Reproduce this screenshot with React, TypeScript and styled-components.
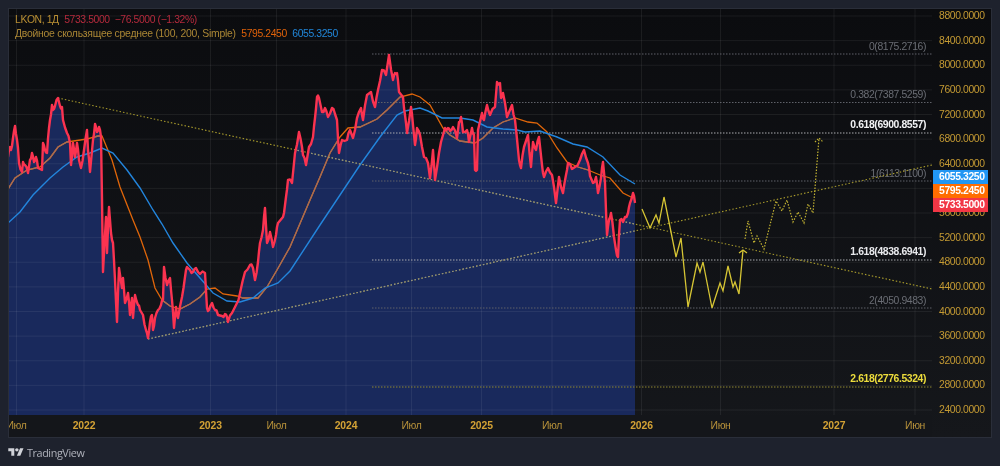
import React from "react";
import styled, { createGlobalStyle } from "styled-components";

type Pt = [number, number];

const GlobalStyle = createGlobalStyle`
  html, body { margin: 0; padding: 0; background: #1e222d; }
`;

const FONT = `"Liberation Sans", Arial, sans-serif`;
const GOLD = "#c49a33";

const Page = styled.div`
  width: 1000px;
  height: 466px;
  box-sizing: border-box;
  padding: 8px 8px 0;
  background: #1e222d;
  font-family: ${FONT};
  overflow: hidden;
  filter: blur(0.3px);
`;

const Chart = styled.div`
  box-sizing: border-box;
  width: 984px;
  height: 430px;
  border: 1px solid #2a2e39;
  display: grid;
  grid-template-columns: 923px 59px;
  grid-template-rows: 406px 22px;
  background: linear-gradient(180deg, #0b0c0f 0%, #15171b 100%);
`;

const Plot = styled.div`
  position: relative;
  overflow: hidden;
  svg { display: block; }
`;

const Legend = styled.div`
  position: absolute;
  left: 6px;
  top: 5px;
  display: flex;
  flex-direction: column;
  gap: 2px;
  line-height: 12px;
`;

const LegendRow = styled.div`
  display: flex;
  gap: 5.5px;
  white-space: pre;
`;

const LegendText = styled.span<{ $color: string; $wide?: boolean }>`
  color: ${(p) => p.$color};
  font-size: 10.4px;
  letter-spacing: ${(p) => (p.$wide ? "-0.25px" : "-0.4px")};
`;

const PriceAxis = styled.div`
  grid-column: 2;
  grid-row: 1 / 3;
  position: relative;
  box-sizing: border-box;
  padding: 1px 0 21px 7px;
  display: flex;
  flex-direction: column;
  justify-content: space-between;
`;

const PriceLabel = styled.div`
  color: ${GOLD};
  font-size: 10.4px;
  letter-spacing: -0.4px;
  line-height: 12px;
`;

const TagStack = styled.div`
  position: absolute;
  left: 1px;
  top: 161px;
  width: 55px;
  display: flex;
  flex-direction: column;
`;

const PriceTag = styled.div<{ $bg: string }>`
  height: 14px;
  box-sizing: border-box;
  padding-left: 6px;
  background: ${(p) => p.$bg};
  color: #fff;
  font-size: 10.4px;
  font-weight: 700;
  letter-spacing: -0.4px;
  line-height: 14px;
`;

const TimeAxis = styled.div`
  position: relative;
  overflow: hidden;
  background: #14161a;
`;

const TimeTick = styled.span.attrs<{ $x: number }>((p) => ({ style: { left: `${p.$x}px` } }))<{ $x: number; $year?: boolean }>`
  position: absolute;
  top: 5px;
  transform: translateX(-50%);
  color: ${(p) => (p.$year ? "#d3a235" : "#b8923a")};
  font-size: 10.4px;
  font-weight: ${(p) => (p.$year ? 700 : 400)};
  letter-spacing: ${(p) => (p.$year ? "-0.1px" : "-0.4px")};
  line-height: 12px;
`;

const Footer = styled.div`
  height: 28px;
  display: flex;
  align-items: center;
  gap: 3px;
`;

const Brand = styled.span`
  color: #aeb1ba;
  font-family: "Open Sans", ${FONT};
  font-size: 10.8px;
  letter-spacing: -0.4px;
`;

const FibLabel = styled.text<{ $tone: string; $bold?: boolean }>`
  fill: ${(p) => p.$tone};
  font-family: ${FONT};
  font-size: 10.4px;
  letter-spacing: -0.4px;
  font-weight: ${(p) => (p.$bold ? 700 : 400)};
`;

const PRICES = [8800, 8400, 8000, 7600, 7200, 6800, 6400, 6000, 5600, 5200, 4800, 4400, 4000, 3600, 3200, 2800, 2400];
const priceY = (p: number) => 16 + ((8800 - p) / 400) * 24.625;

const TICKS: { x: number; label: string; year?: boolean }[] = [
  { x: 16.5, label: "Июл" },
  { x: 84, label: "2022", year: true },
  { x: 210.5, label: "2023", year: true },
  { x: 276.5, label: "Июл" },
  { x: 346, label: "2024", year: true },
  { x: 411.5, label: "Июл" },
  { x: 481.5, label: "2025", year: true },
  { x: 552, label: "Июл" },
  { x: 641.5, label: "2026", year: true },
  { x: 720.5, label: "Июн" },
  { x: 834, label: "2027", year: true },
  { x: 915, label: "Июн" },
];

const FIBS: { y: number; ly: number; label: string; line: string; tone: string; bold?: boolean }[] = [
  { y: 54, ly: 49.5, label: "0(8175.2716)", line: "#5f6168", tone: "#6a6d74" },
  { y: 102.5, ly: 98, label: "0.382(7387.5259)", line: "#5f6168", tone: "#6a6d74" },
  { y: 133, ly: 128, label: "0.618(6900.8557)", line: "#a9aaae", tone: "#f2f3f5", bold: true },
  { y: 181, ly: 176.5, label: "1(6113.1100)", line: "#5f6168", tone: "#6a6d74" },
  { y: 260, ly: 255, label: "1.618(4838.6941)", line: "#a9aaae", tone: "#e8e9ec", bold: true },
  { y: 308, ly: 303.5, label: "2(4050.9483)", line: "#5f6168", tone: "#6a6d74" },
  { y: 387, ly: 382, label: "2.618(2776.5324)", line: "#8f8732", tone: "#ecdc3c", bold: true },
];

const PRICE_LINE: Pt[] = [
  [8, 157], [10, 147], [11, 150], [13, 138], [15, 126], [17, 140], [18, 148], [19, 163], [22, 172], [23, 162], [25, 165], [28, 173],
  [30, 160], [32, 153], [34, 162], [36, 157], [38, 168], [42, 170], [43, 143], [45, 150], [47, 153], [49, 128], [50, 120], [52, 105],
  [53, 110], [55, 106], [58, 98], [60, 106], [62, 107], [63, 120], [67, 133], [70, 143], [71, 165], [73, 143], [75, 157], [77, 143],
  [79, 160], [81, 168], [84, 150], [87, 130], [88, 150], [90, 172], [93, 140], [95, 124], [97, 132], [99, 127], [101, 137], [102, 200],
  [103, 272], [106, 217], [107, 253], [109, 207], [111, 233], [113, 243], [115, 280], [117, 322], [119, 268], [122, 288], [123, 278],
  [125, 303], [128, 293], [130, 315], [132, 298], [133, 318], [135, 295], [138, 305], [140, 310], [143, 315], [146, 330], [148, 338],
  [150, 322], [152, 315], [153, 330], [155, 318], [158, 310], [161, 305], [163, 300], [164, 267], [167, 285], [170, 278], [172, 300],
  [174, 328], [176, 307], [178, 318], [182, 297], [185, 277], [187, 267], [190, 270], [193, 272], [196, 268], [200, 274], [205, 273],
  [207, 308], [209, 310], [212, 303], [215, 310], [218, 315], [222, 316], [225, 314], [227, 317], [228, 322], [232, 313], [237, 303],
  [240, 293], [245, 272], [250, 265], [253, 268], [255, 280], [258, 262], [260, 243], [263, 230], [265, 208], [267, 243], [270, 232],
  [273, 247], [276, 235], [278, 223], [283, 217], [285, 205], [286, 197], [288, 180], [292, 183], [295, 153], [299, 132], [302, 147],
  [303, 155], [306, 165], [309, 147], [313, 137], [315, 118], [317, 97], [319, 98], [322, 112], [325, 108], [328, 117], [332, 108],
  [335, 114], [337, 120], [339, 153], [342, 140], [347, 140], [350, 130], [353, 138], [357, 118], [361, 108], [363, 120], [367, 95],
  [371, 92], [375, 107], [378, 90], [382, 70], [386, 75], [389, 55], [393, 80], [395, 73], [397, 73], [399, 92], [403, 97], [405, 115],
  [407, 133], [411, 107], [413, 125], [415, 145], [417, 128], [420, 135], [424, 157], [428, 163], [430, 178], [433, 150], [435, 180],
  [439, 153], [443, 135], [445, 128], [448, 128], [450, 131], [453, 127], [457, 138], [459, 122], [461, 117], [463, 132], [467, 130],
  [469, 142], [472, 128], [474, 135], [475, 170], [477, 170], [478, 130], [482, 113], [484, 120], [487, 105], [490, 115], [495, 107],
  [497, 82], [500, 83], [501, 98], [503, 93], [507, 117], [512, 105], [515, 120], [519, 160], [521, 168], [524, 147], [528, 135],
  [531, 167], [533, 142], [536, 150], [539, 137], [542, 165], [544, 177], [548, 168], [552, 175], [556, 203], [559, 177], [563, 193],
  [566, 175], [568, 163], [572, 169], [575, 167], [580, 160], [584, 150], [588, 163], [590, 176], [593, 183], [596, 177], [598, 193],
  [601, 178], [603, 162], [605, 183], [607, 235], [609, 220], [611, 213], [614, 237], [616, 250], [618, 257], [619, 235], [620, 220],
  [623, 222], [625, 217], [628, 213], [630, 203], [633, 193], [635, 203],
];

const MA_100: Pt[] = [
  [8, 189], [15, 178], [27, 170], [40, 167], [50, 158], [58, 147], [67, 142], [87, 139], [98, 136], [102, 136], [112, 160], [120, 187],
  [133, 220], [140, 237], [148, 260], [155, 288], [162, 300], [170, 306], [180, 309], [190, 304], [200, 297], [207, 289], [215, 288],
  [223, 294], [237, 296], [243, 298], [258, 298], [267, 287], [277, 270], [290, 247], [310, 200], [320, 177], [330, 153], [340, 137],
  [348, 128], [360, 127], [377, 119], [387, 110], [400, 97], [412, 94], [420, 97], [430, 105], [443, 128], [450, 135], [460, 141],
  [475, 143], [483, 138], [493, 128], [503, 122], [515, 118], [528, 122], [537, 123], [547, 132], [557, 148], [567, 162], [578, 167],
  [588, 170], [600, 175], [610, 178], [623, 193], [633, 198],
];

const MA_200: Pt[] = [
  [8, 223], [20, 212], [33, 195], [50, 178], [63, 167], [77, 157], [90, 153], [102, 148], [113, 153], [127, 170], [140, 188], [153, 210],
  [162, 224], [173, 243], [187, 263], [200, 278], [213, 293], [227, 301], [240, 302], [253, 298], [265, 288], [278, 283], [290, 271],
  [320, 225], [340, 195], [360, 165], [380, 137], [397, 115], [405, 111], [420, 108], [428, 111], [442, 118], [460, 118], [473, 120],
  [487, 127], [503, 129], [517, 130], [525, 132], [540, 131], [557, 137], [573, 144], [587, 147], [603, 157], [620, 175], [635, 184],
];

const WAVE_SOLID: Pt[] = [
  [642, 209], [650, 228], [656, 215], [659, 223], [664, 197], [670, 227], [676, 257], [681, 238], [688, 307], [697, 263], [700, 272],
  [703, 262], [712, 308], [720, 283], [723, 291], [728, 266], [733, 287], [735, 282], [739, 294], [743, 250],
];

const WAVE_DOTTED: Pt[] = [
  [745, 239], [748, 221], [754, 243], [757, 236], [764, 249], [776, 201], [782, 211], [787, 200], [793, 222], [798, 212], [804, 223],
  [808, 204], [813, 213], [819, 138],
];

const toPath = (pts: Pt[]) => pts.map(([x, y], i) => `${i ? "L" : "M"}${x} ${y}`).join(" ");
const AREA = `${toPath(PRICE_LINE)} L635 415 L8 415 Z`;

// daily bars are denser than the traced points, so shake each longer leg a little
const roughen = (pts: Pt[]) =>
  pts.flatMap(([x, y], i): Pt[] => {
    const next = pts[i + 1];
    if (!next || next[0] - x < 2) return [[x, y]];
    const kick = ((i * 7) % 5) - 2;
    return [[x, y], [(x + next[0]) / 2, (y + next[1]) / 2 + kick]];
  });

function TvLogo() {
  return (
    <svg width="16" height="12" viewBox="0 0 36 28" fill="#d0d2d8">
      <path d="M14 23H7V12H0V5h14v18zM28 23h-8l7.5-18h8L28 23z" />
      <circle cx="20" cy="9" r="4" />
    </svg>
  );
}

export default function App() {
  return (
    <Page>
      <GlobalStyle />
      <Chart>
        <Plot>
          <svg width="923" height="406" viewBox="9 9 923 406">
            <defs>
              <clipPath id="under-price">
                <path d={AREA} />
              </clipPath>
            </defs>

            <path d={AREA} fill="#19295c" />

            {PRICES.map((p) => (
              <line key={p} x1="9" x2="932" y1={priceY(p)} y2={priceY(p)} stroke="#ffffff" strokeOpacity="0.065" />
            ))}
            {TICKS.map((t) => (
              <line key={t.x} x1={t.x} x2={t.x} y1="9" y2="415" stroke="#ffffff" strokeOpacity="0.065" />
            ))}

            {FIBS.map((f) => (
              <g key={f.label}>
                <line x1="372" x2="932" y1={f.y} y2={f.y} stroke={f.line} strokeDasharray="1.5 1.5" />
                <FibLabel x="926" y={f.ly} textAnchor="end" $tone={f.tone} $bold={f.bold}>
                  {f.label}
                </FibLabel>
              </g>
            ))}

            <path d={toPath(MA_100)} fill="none" stroke="#e0660a" strokeWidth="1.3" />
            <path d={toPath(MA_100)} fill="none" stroke="#a56c55" strokeWidth="1.3" clipPath="url(#under-price)" />
            <path d={toPath(MA_200)} fill="none" stroke="#2385dc" strokeWidth="1.4" />

            <path d="M58 98 L932 289" stroke="#a89b2c" strokeWidth="1.1" strokeDasharray="1.5 2" />
            <path d="M148 339 L932 165" stroke="#a89b2c" strokeWidth="1.1" strokeDasharray="1.5 2" />
            <g clipPath="url(#under-price)">
              <path d="M58 98 L932 289" stroke="#8f9088" strokeWidth="1.1" strokeDasharray="1.5 2" />
              <path d="M148 339 L932 165" stroke="#8f9088" strokeWidth="1.1" strokeDasharray="1.5 2" />
            </g>

            <path d={toPath(roughen(PRICE_LINE))} fill="none" stroke="#fb3350" strokeWidth="2.4" strokeLinejoin="round" />

            <path d={toPath(WAVE_SOLID)} fill="none" stroke="#d6c534" strokeWidth="1.3" />
            <path d="M739 253 L743 250 L747 253" fill="none" stroke="#d6c534" strokeWidth="1.3" />
            <path d={toPath(WAVE_DOTTED)} fill="none" stroke="#c2b232" strokeWidth="1.2" strokeDasharray="1.5 1.5" />
            <path d="M815 142 L819 138 L823 142" fill="none" stroke="#c2b232" strokeWidth="1.2" strokeDasharray="1.5 1.5" />
          </svg>
          <Legend>
            <LegendRow>
              <LegendText $color="#b98f33">LKON, 1Д</LegendText>
              <LegendText $color="#b52a3c">{"5733.5000  −76.5000 (−1.32%)"}</LegendText>
            </LegendRow>
            <LegendRow>
              <LegendText $color="#ab8735" $wide>Двойное скользящее среднее (100, 200, Simple)</LegendText>
              <LegendText $color="#e0620a">5795.2450</LegendText>
              <LegendText $color="#2186d8">6055.3250</LegendText>
            </LegendRow>
          </Legend>
        </Plot>

        <PriceAxis>
          {PRICES.map((p) => (
            <PriceLabel key={p}>{p.toFixed(4)}</PriceLabel>
          ))}
          <TagStack>
            <PriceTag $bg="#2196f3">6055.3250</PriceTag>
            <PriceTag $bg="#ff6d00">5795.2450</PriceTag>
            <PriceTag $bg="#f23645">5733.5000</PriceTag>
          </TagStack>
        </PriceAxis>

        <TimeAxis>
          {TICKS.map((t) => (
            <TimeTick key={t.x} $x={t.x - 9} $year={t.year}>
              {t.label}
            </TimeTick>
          ))}
        </TimeAxis>
      </Chart>
      <Footer>
        <TvLogo />
        <Brand>TradingView</Brand>
      </Footer>
    </Page>
  );
}
